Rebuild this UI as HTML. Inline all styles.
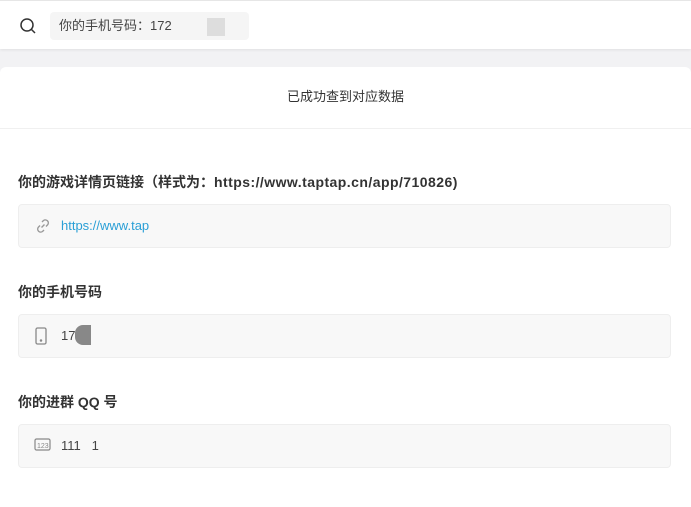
<!DOCTYPE html>
<html><head><meta charset="utf-8"><style>
*{box-sizing:border-box;margin:0;padding:0}
body{width:691px;height:497px;overflow:hidden;background:#f2f2f4;font-family:"Liberation Sans","Noto Sans CJK SC",sans-serif;color:#333;position:relative}
.top{position:absolute;left:0;top:0;width:691px;height:49px;background:#fff;border-top:1px solid #e6e6e6;box-shadow:0 1px 3px rgba(0,0,0,.08)}
.sb{position:absolute;left:50px;top:11px;width:199px;height:28px;background:#f5f5f5;border-radius:4px;font-size:13px;line-height:28px;padding-left:9px;color:#444}
.card{position:absolute;left:0;top:67px;width:691px;height:440px;background:#fff;border-radius:6px 6px 0 0}
.title{height:62px;line-height:60px;text-align:center;font-size:13px;border-bottom:1px solid #f0f0f0;color:#333}
.lab{position:absolute;left:18px;font-size:14px;font-weight:bold;color:#333}
.lab .l{letter-spacing:.45px}
.inp{position:absolute;left:18px;width:653px;height:43px;background:#f8f8f8;border:1px solid #eee;border-radius:4px;font-size:13px;line-height:41px;padding-left:42px;color:#444}
.inp svg{position:absolute;left:15px;top:12px}
</style></head><body>
<div class="top">
<svg style="position:absolute;left:19px;top:16px" width="18" height="18" viewBox="0 0 18 18" fill="none" stroke="#333" stroke-width="1.5"><circle cx="8" cy="8" r="6"/><path d="M12.5 12.5L16 16"/></svg>
<div class="sb">你的手机号码：172<span style="display:inline-block;width:18px;height:18px;background:#ddd;margin-left:35px;vertical-align:middle"></span></div>
</div>
<div class="card">
<div class="title">已成功查到对应数据</div>
</div>
<div class="lab" style="top:172px">你的游戏详情页链接（样式为：<span class="l">https://www.taptap.cn/app/710826)</span></div>
<div class="inp" style="top:204px;height:44px;color:#2a9fd6"><svg width="18" height="18" viewBox="0 0 18 18" fill="none" stroke="#999" stroke-width="1.4"><path d="M7.5 10.5l3-3M8 5l1.5-1.5a3 3 0 014.2 4.2L12 9.5M10 13l-1.5 1.5a3 3 0 01-4.2-4.2L6 8.5"/></svg>https://www.tap</div>
<div class="lab" style="top:282px">你的手机号码</div>
<div class="inp" style="top:314px;height:44px"><svg width="14" height="18" viewBox="0 0 14 18" fill="none" stroke="#888" stroke-width="1.3"><rect x="2" y="1" width="10" height="16" rx="1.5"/><circle cx="7" cy="13.5" r=".6" fill="#888"/></svg>17<span style="display:inline-block;width:16px;height:20px;background:#888;border-radius:8px 0 0 8px;vertical-align:middle;margin-top:-4px"></span></div>
<div class="lab" style="top:392px">你的进群 QQ 号</div>
<div class="inp" style="top:424px;height:44px"><svg width="18" height="16" viewBox="0 0 18 16" fill="none" stroke="#888" stroke-width="1.2"><rect x="1" y="2" width="15" height="11" rx="1.5"/><text x="3" y="11" font-size="7" fill="#888" stroke="none" font-family="Liberation Sans">123</text></svg>111&nbsp;&nbsp;&nbsp;1</div>
</body></html>
